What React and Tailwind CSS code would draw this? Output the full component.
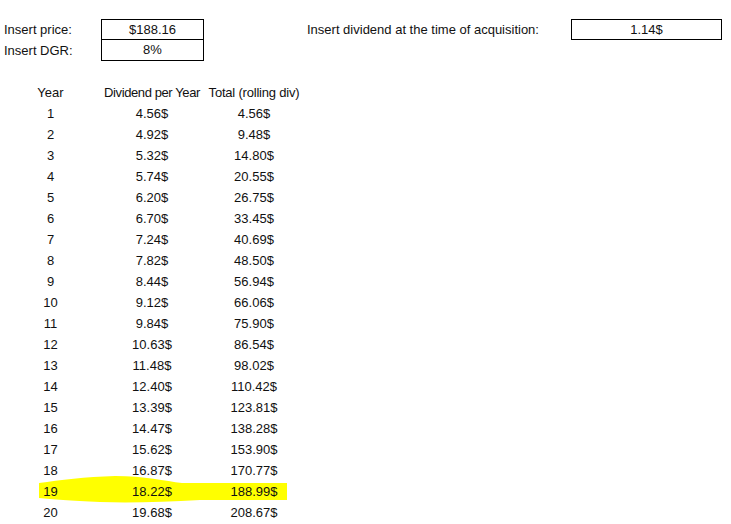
import React from "react";

const rows = [
  ["1", "4.56$", "4.56$"],
  ["2", "4.92$", "9.48$"],
  ["3", "5.32$", "14.80$"],
  ["4", "5.74$", "20.55$"],
  ["5", "6.20$", "26.75$"],
  ["6", "6.70$", "33.45$"],
  ["7", "7.24$", "40.69$"],
  ["8", "7.82$", "48.50$"],
  ["9", "8.44$", "56.94$"],
  ["10", "9.12$", "66.06$"],
  ["11", "9.84$", "75.90$"],
  ["12", "10.63$", "86.54$"],
  ["13", "11.48$", "98.02$"],
  ["14", "12.40$", "110.42$"],
  ["15", "13.39$", "123.81$"],
  ["16", "14.47$", "138.28$"],
  ["17", "15.62$", "153.90$"],
  ["18", "16.87$", "170.77$"],
  ["19", "18.22$", "188.99$"],
  ["20", "19.68$", "208.67$"],
];

export default function App() {
  return (
    <div
      className="relative w-[731px] h-[524px] bg-white text-[13px] text-[#111] overflow-hidden"
      style={{ fontFamily: '"Liberation Sans", Arial, sans-serif' }}
    >
      <svg
        className="absolute left-0 top-0 pointer-events-none"
        width="731"
        height="524"
        viewBox="0 0 731 524"
      >
        <path
          d="M39,483 C60,480 85,477 115,476 C145,476 165,481 182,483 L287,483 L287,500 L200,500 C165,502 130,503 100,502 C70,501 52,499 39,498 Z"
          fill="#ffff00"
        />
      </svg>
      <div className="relative pt-[19px]">
        <div className="flex">
          <div className="flex flex-col">
            <div className="flex h-[21px]">
              <div className="w-[101px] pl-[4px] flex items-center">Insert price:</div>
              <div className="w-[103px] border border-black flex items-center justify-center">$188.16</div>
            </div>
            <div className="flex h-[21px]">
              <div className="w-[101px] pl-[4px] flex items-center">Insert DGR:</div>
              <div className="w-[103px] border border-black border-t-0 flex items-center justify-center">8%</div>
            </div>
          </div>
          <div className="flex h-[21px] ml-[103px]">
            <div className="w-[264px] flex items-center">Insert dividend at the time of acquisition:</div>
            <div className="w-[151px] border border-black flex items-center justify-center">1.14$</div>
          </div>
        </div>
        <div className="h-[21px]" />
        <div className="flex h-[21px] items-center whitespace-nowrap">
          <div className="w-[101px] text-center">Year</div>
          <div className="w-[102px] flex justify-center">
            <span className="tracking-[-0.4px]">Dividend per Year</span>
          </div>
          <div className="w-[102px] flex justify-center">
            <span className="tracking-[-0.2px]">Total (rolling div)</span>
          </div>
        </div>
        {rows.map(([y, d, t]) => (
          <div key={y} className="flex h-[21px] items-center whitespace-nowrap">
            <div className="w-[101px] text-center">{y}</div>
            <div className="w-[102px] text-center">{d}</div>
            <div className="w-[102px] text-center">{t}</div>
          </div>
        ))}
      </div>
    </div>
  );
}
